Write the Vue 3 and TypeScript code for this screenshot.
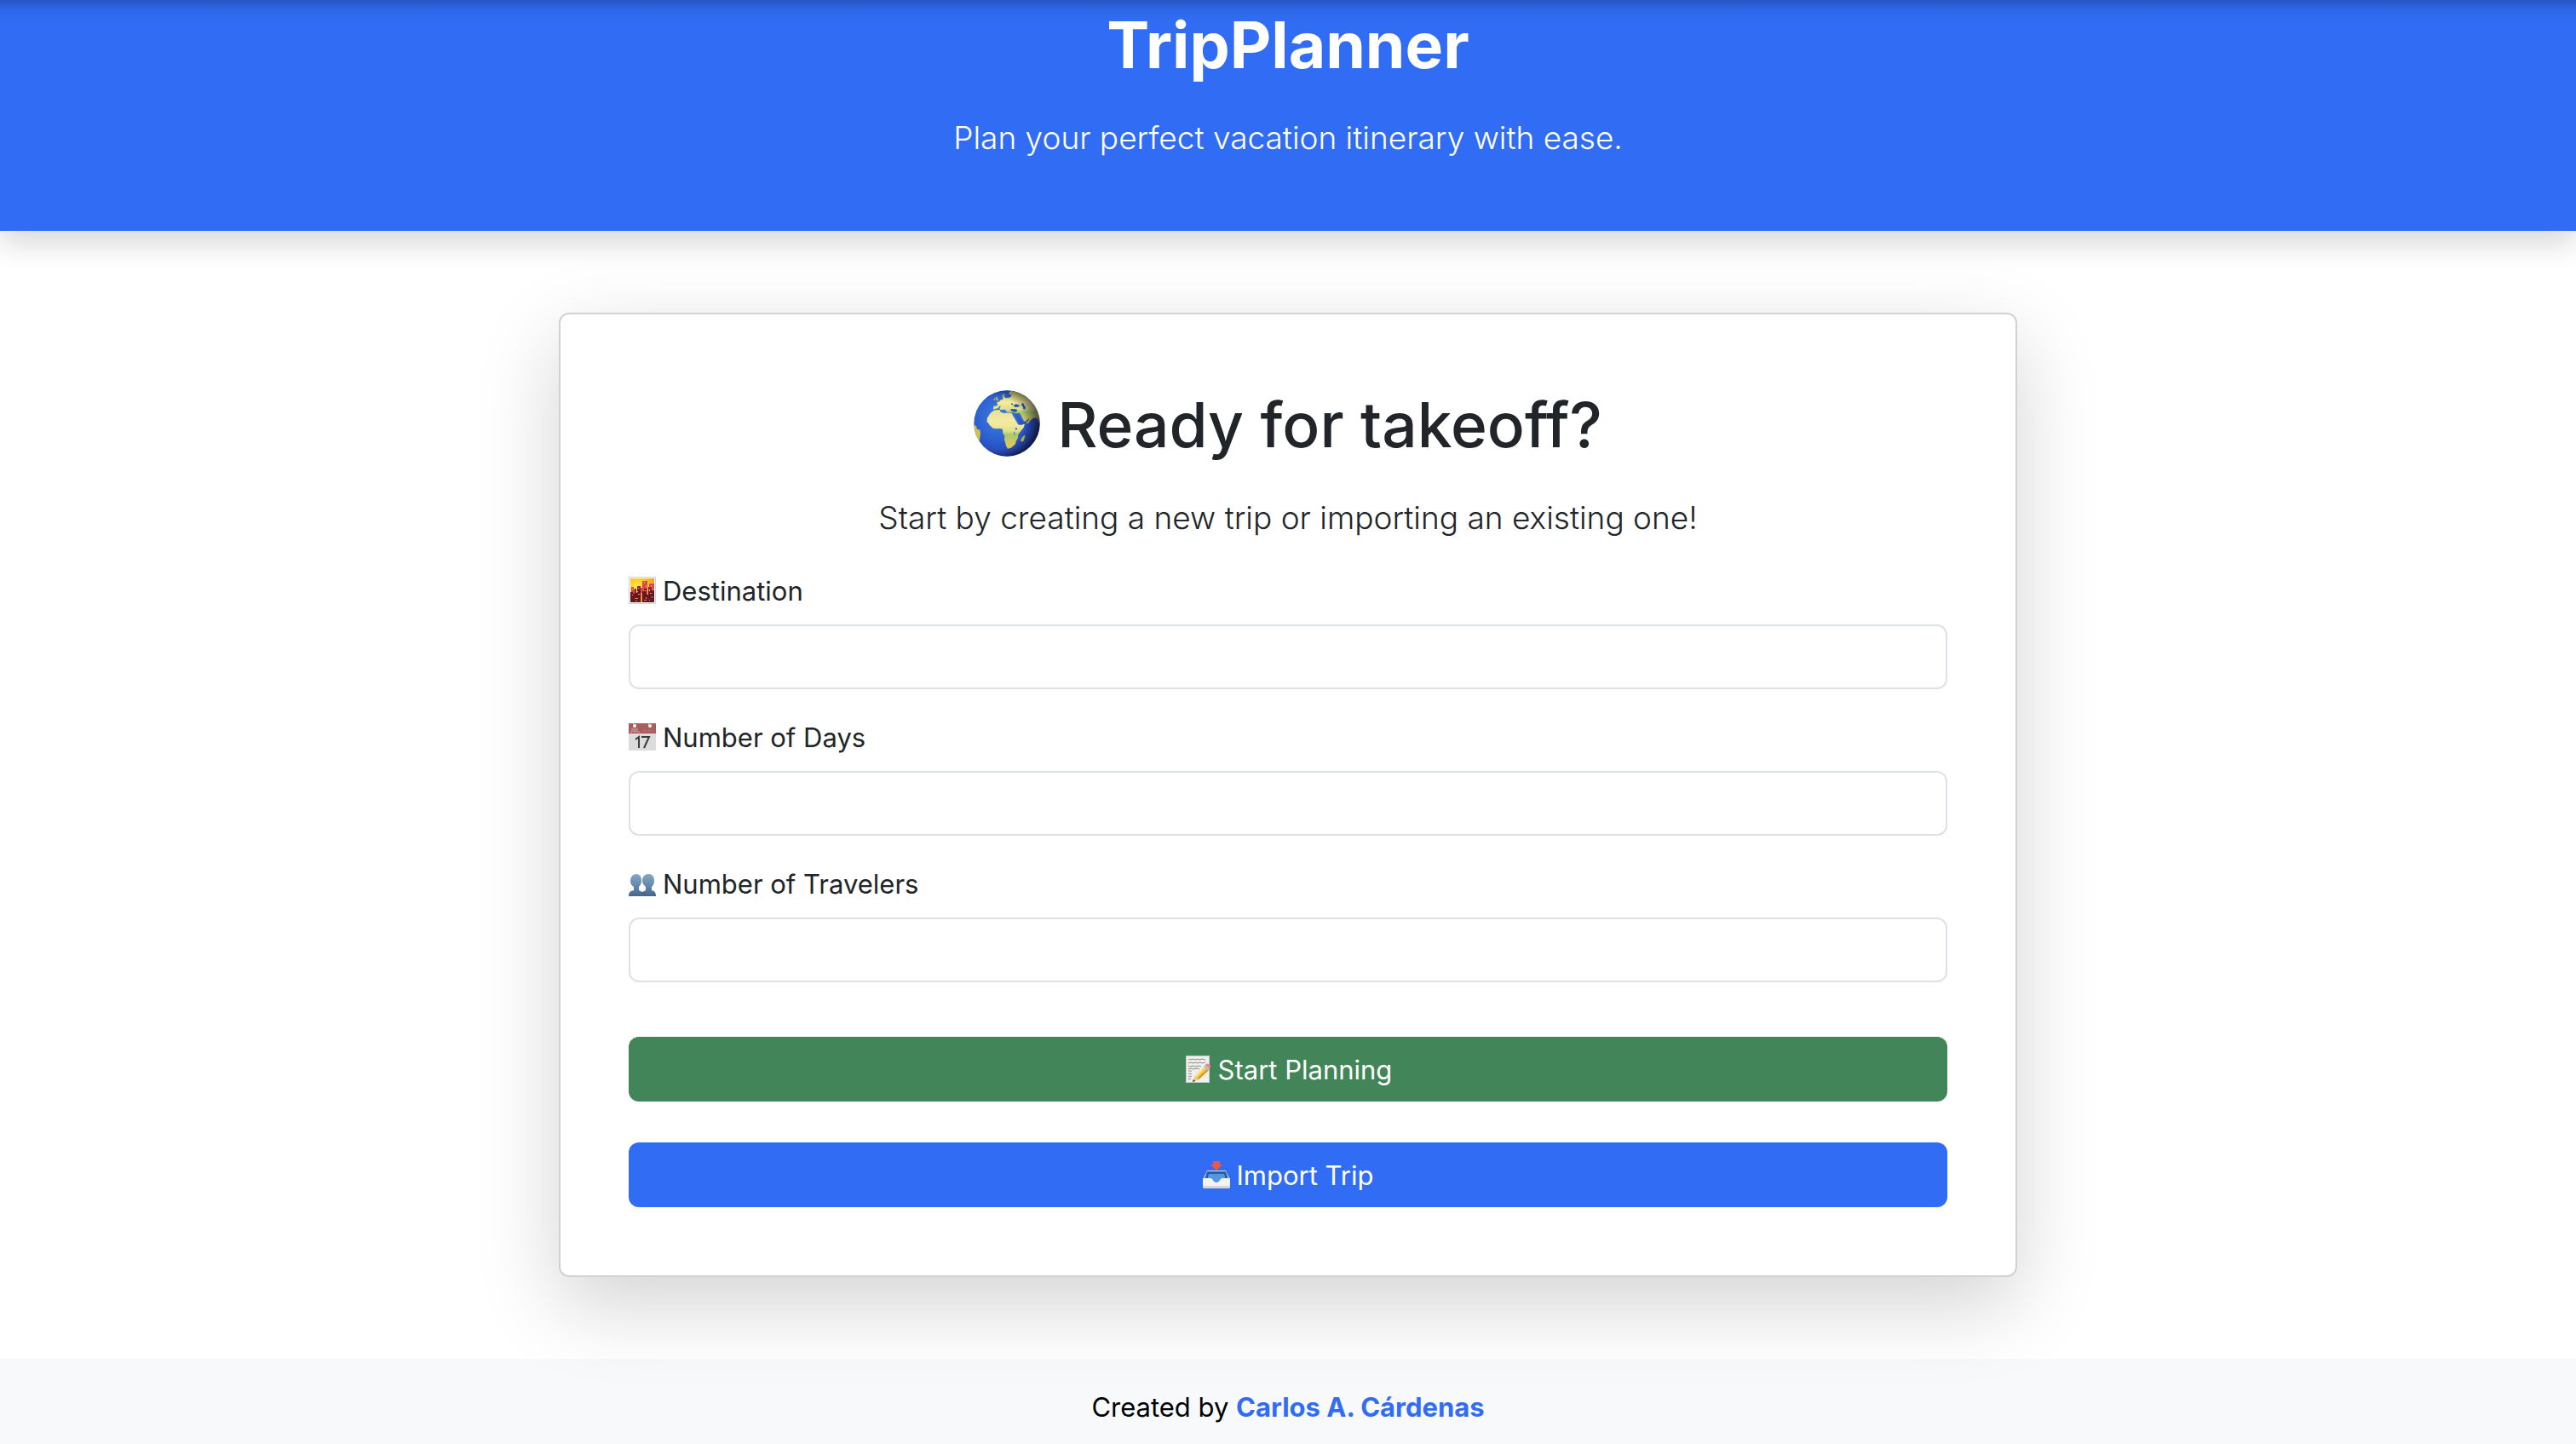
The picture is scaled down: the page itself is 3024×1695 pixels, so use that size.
<script setup lang="ts">
import { ref } from 'vue'

const destination = ref('')
const days = ref<number | null>(null)
const travelers = ref<number | null>(null)
</script>

<template>
  <div class="page">
    <header class="hero">
      <h1 class="display hero-title"><span>TripPlanner</span></h1>
      <p class="lead">Plan your perfect vacation itinerary with ease.</p>
    </header>

    <main class="container">
      <section class="card">
        <h2 class="display card-title">
          <svg class="globe" viewBox="48 53 234 234" aria-hidden="true">
            <defs>
              <radialGradient id="sea" cx="0.38" cy="0.4" r="0.66">
                <stop offset="0" stop-color="#3f7fe0" />
                <stop offset="0.55" stop-color="#2c5fd0" />
                <stop offset="0.85" stop-color="#2748b4" />
                <stop offset="1" stop-color="#1b2a6b" />
              </radialGradient>
              <linearGradient id="land" x1="0" y1="0" x2="0" y2="1">
                <stop offset="0" stop-color="#b9bd5c" />
                <stop offset="0.36" stop-color="#f3eb9c" />
                <stop offset="0.55" stop-color="#dfe08a" />
                <stop offset="0.64" stop-color="#a5c96f" />
                <stop offset="0.8" stop-color="#cdc765" />
                <stop offset="1" stop-color="#dccb57" />
              </linearGradient>
              <radialGradient id="shade" cx="0.36" cy="0.5" r="0.66">
                <stop offset="0.6" stop-color="#000000" stop-opacity="0" />
                <stop offset="1" stop-color="#0c0a20" stop-opacity="0.7" />
              </radialGradient>
              <clipPath id="disc"><circle cx="165" cy="170" r="116" /></clipPath>
            </defs>
            <circle cx="165" cy="170" r="116" fill="url(#sea)" />
            <g clip-path="url(#disc)">
              <path d="M117 121l1-12 13-1 2-5-5-6 8-3 8-7 7-2 0-8 5-2 3 6 11-1 9-4 3-8-7 1-3-6 5-7 12-5-4 7 8-1 9-3 30 8 30 30 20 38 2 45-4-2-6-17-8-6-9 2-12 10-2 6-9 3-10-11-12-24-5-3-8 2-14-3-12 1-10-4-4-8-16 2-4-6 5-7-5-1-5 7z" fill="url(#land)" />
              <path d="M95 165l1-14 11-17 13-10 19-2 4 8 10 4 14-1 15 2 15 29 11 12 20-4-4 13-10 12-9 12-1 12-6 10-4 13-14 12-12 3-6-10-3-12-3-11 1-12-6-9-1-14-8-3-12 1-14-2-11-10-7-10z" fill="url(#land)" />
              <path d="M95 165l1-14 11-17 13-10 19-2 4 8 10 4 14-1 15 2 12 20 8 13-30-4-30 3-30-2z" fill="#f8efad" opacity="0.7" />
              <path d="M147 72l9-7 2 5-7 9zM128 91l-3-9 4-9 3 8 4 8zM119 89l0-6 5-2-1 7z" fill="#a9b65b" />
              <path d="M213 229l6-10 8-8 2 5-5 16-7 3z" fill="#d4c04c" />
              <path d="M44 170l15 12-1 7 12 4 2 11-2 16-3 22-12-10-10-18z" fill="#d3c34a" />
            </g>
            <g fill="#2a58b8">
              <path d="M187 108l10-7 5 2 8 3-4 6-12 1zM217 100l6-1 3 8 5 5-2 10-6-3-2-9-5-4zM178 119l21 1 3 7-10 4-12-5zM181 99l7 2-3 4-5-1z" />
              <path d="M196 138l5 2 13 21 5 6 14-5 9-9 2 3-10 12-17 7-7-8z" />
            </g>
            <path d="M194 187l5-3 2 6-4 4zM189 199l3 1 2 12-3-2z" fill="#2c5fd0" />
            <circle cx="165" cy="170" r="116" fill="url(#shade)" />
          </svg>
          <span>Ready for takeoff?</span>
        </h2>
        <p class="lead">Start by creating a new trip or importing an existing one!</p>

        <form class="form" @submit.prevent>
          <div class="field">
            <label for="destination">
              <svg class="icon" viewBox="0 0 32 32" aria-hidden="true">
                <defs>
                  <radialGradient id="dusk" cx="0.3" cy="0.45" r="0.8">
                    <stop offset="0" stop-color="#fff13d" />
                    <stop offset="0.55" stop-color="#fcc92b" />
                    <stop offset="1" stop-color="#f19a22" />
                  </radialGradient>
                </defs>
                <rect width="32" height="32" fill="#cbd5d5" />
                <rect x="1" y="1" width="30" height="30" fill="#ffffff" />
                <rect x="2" y="2" width="28" height="28" fill="url(#dusk)" />
                <path d="M3 30V12h3v3h3v15zM16 30V5h6v25zM24 30V8h6v22zM13 30V13h3v17z" fill="#d9474c" />
                <path d="M2 30V18h3v2h2v-6h2v5h1v-8h4v19zM16 30V17h2v-3h3v7h2v-9h4v4h3v14z" fill="#681622" />
                <path d="M7 15h2v3H7zM10 11h4v4h-4zM23 12h4v4h-4z" fill="#8c2531" />
                <path d="M14 19h2v11h-2z" fill="#f58a3c" />
                <path d="M18 6h1v2h-1zM20 10h1v2h-1zM26 10h1v2h-1zM28 14h1v2h-1zM4 14h1v1H4zM11 13h1v1h-1zM24 15h1v2h-1z" fill="#f6a5a0" />
                <path d="M4 21h1v1H4zM11 20h2v1h-2zM25 19h2v1h-2zM20 24h1v2h-1zM27 23h1v2h-1zM10 17h1v1h-1zM24 27h1v1h-1z" fill="#d99a9a" />
                <path d="M7 25h4v1H7zM17 16h4v1h-4zM18 27h3v1h-3zM8 28h2v1H8z" fill="#c88b2d" />
              </svg>
              <span>Destination</span>
            </label>
            <input id="destination" v-model="destination" type="text" />
          </div>

          <div class="field">
            <label for="days">
              <svg class="icon" viewBox="0 0 32 32" aria-hidden="true">
                <rect width="32" height="32" fill="#dcdcdc" />
                <rect width="32" height="12" fill="#a65e5e" />
                <circle cx="7" cy="3" r="2" fill="#ffffff" />
                <circle cx="25" cy="3" r="2" fill="#ffffff" />
                <path d="M5 0l2 2M23 0l2 3" stroke="#e7cccc" stroke-width="1" />
                <path d="M4 6v4H2M6 6v4h2V6M10 6v4h3" fill="none" stroke="#d3aaaa" stroke-width="1" />
                <path d="M18 7v3M20 7v3M23 7v3M25 7v3M28 7v3" stroke="#b37575" stroke-width="1" />
                <path d="M8 19l4-3v13M15 16h9l-6 13" fill="none" stroke="#3b3b3b" stroke-width="2" />
              </svg>
              <span>Number of Days</span>
            </label>
            <input id="days" v-model="days" type="number" />
          </div>

          <div class="field">
            <label for="travelers">
              <svg class="icon" viewBox="0 0 32 32" aria-hidden="true">
                <defs>
                  <linearGradient id="bust" x1="0" y1="5" x2="0" y2="31" gradientUnits="userSpaceOnUse">
                    <stop offset="0" stop-color="#86a6c4" />
                    <stop offset="0.5" stop-color="#658aad" />
                    <stop offset="1" stop-color="#48658a" />
                  </linearGradient>
                </defs>
                <path d="M9 5c4 0 6 3 6 8 0 3-1 5-3 7v4l4 2 4-2v-4c-2-2-4-4-4-7 0-5 3-8 7-8 5 0 7 3 7 8 0 3-1 5-3 7v4c3 1 5 2 5 7H0c0-5 2-6 6-7v-4c-3-2-4-4-4-7 0-5 3-8 7-8z" fill="url(#bust)" />
                <path d="M16 27l3 2 2 2" fill="none" stroke="#3f5a7c" stroke-width="1" />
              </svg>
              <span>Number of Travelers</span>
            </label>
            <input id="travelers" v-model="travelers" type="number" />
          </div>

          <div class="actions">
            <button type="submit" class="btn btn-success">
              <svg class="icon" viewBox="0 0 32 32" aria-hidden="true">
                <rect x="2" y="0" width="28" height="32" fill="#c9cbc7" />
                <rect x="3" y="1" width="26" height="30" fill="#efefed" />
                <g fill="none" stroke="#8c8c8c" stroke-width="1">
                  <path d="M5 5l2-1 1 1 3-1 2 1 3-1 2 1 3-1 4 1" />
                  <path d="M5 9l3-1 2 1 4-1 2 1 3-1 2 1 4-1" />
                  <path d="M5 12l2 1 3-1 3 1 4-1 3 1" />
                  <path d="M5 16l3-1 3 1 4-1 3 1M5 18h4" />
                  <path d="M5 22l2-1 2 1M5 25l3-1 1 1M5 28l3-1" />
                </g>
                <path d="M13 24l12-12 4 5-12 11-6 3z" fill="#f2bd2f" />
                <path d="M13 24l12-12 2 1-13 13z" fill="#ffe184" />
                <path d="M17 28l12-11-1-1-12 11z" fill="#c98a1c" />
                <path d="M13 24l4 4-7 3z" fill="#e8c998" />
                <path d="M11 28l2 2-3 1z" fill="#333333" />
                <path d="M23 13l2-2 5 5-2 2z" fill="#b9bcc0" />
                <path d="M25 11c1-2 3-2 5 0 2 1 1 3 0 5z" fill="#e98592" />
              </svg>
              <span>Start Planning</span>
            </button>
            <button type="button" class="btn btn-primary">
              <svg class="icon" viewBox="0 0 32 32" aria-hidden="true">
                <path d="M5 11h22l4 9v3H1v-3z" fill="#e3e3e1" />
                <path d="M5 12h22l3 9-8 6H10l-8-6z" fill="#2c5f9f" />
                <path d="M7 15h18l2 8-7 5h-8l-7-5z" fill="#5598e2" />
                <path d="M0 20h9c3 0 3 5 7 5s4-5 7-5h9v10q0 2-2 2H2q-2 0-2-2z" fill="#f3f3f2" />
                <path d="M0 29h32v1q0 2-2 2H2q-2 0-2-2z" fill="#d7d6d3" />
                <path d="M12 0h8v4h3l-7 7-7-7h3z" fill="#e8574b" />
              </svg>
              <span>Import Trip</span>
            </button>
          </div>
        </form>
      </section>
    </main>

    <footer class="footer">
      <p>Created by <a href="#">Carlos A. Cárdenas</a></p>
    </footer>
  </div>
</template>

<style>
body {
  margin: 0;
  background: #ffffff;
}
</style>

<style scoped>
.page {
  font-family: Inter, 'Liberation Sans', sans-serif;
  font-size: 31px;
  line-height: 48px;
  color: #212529;
}

.hero {
  position: relative;
  padding: 3px 24px 80px;
  text-align: center;
  color: #ffffff;
  background: linear-gradient(rgba(0, 0, 0, 0.2), rgba(0, 0, 0, 0.05) 12px, transparent 24px) #316cf4;
  box-shadow: 0 16px 32px rgba(0, 0, 0, 0.15);
}

.display {
  display: flex;
  justify-content: center;
  align-items: center;
  gap: 20px;
  margin: 0 0 32px;
  line-height: 92px;
}

.display span {
  padding-top: 4px;
}

.hero-title {
  font-size: 75px;
  font-weight: 700;
}

.card-title {
  font-size: 73px;
  font-weight: 500;
}

.lead {
  margin: 0;
  padding-top: 2px;
  font-size: 37px;
  line-height: 58px;
  font-weight: 300;
}

.container {
  box-sizing: border-box;
  width: 100%;
  max-width: 1760px;
  margin: 0 auto;
  padding: 96px 24px;
}

.card {
  position: relative;
  padding: 80px;
  border: 2px solid #d2d2d2;
  border-radius: 12px;
  background: #ffffff;
  box-shadow: 0 32px 96px rgba(0, 0, 0, 0.175);
  text-align: center;
}

.globe {
  width: 78px;
  height: 78px;
}

.form {
  display: flex;
  flex-direction: column;
  gap: 32px;
  margin-top: 32px;
}

.field {
  display: flex;
  flex-direction: column;
  gap: 16px;
}

.field label {
  display: flex;
  align-items: center;
  gap: 8px;
}

.field span,
.btn span {
  padding-top: 2px;
  line-height: 46px;
}

.icon {
  flex: none;
  width: 32px;
  height: 32px;
}

.field input {
  box-sizing: border-box;
  width: 100%;
  height: 76px;
  margin: 0;
  padding: 12px 24px;
  border: 2px solid #dee2e6;
  border-radius: 12px;
  background: #ffffff;
  color: inherit;
  font: inherit;
  appearance: textfield;
}

.actions {
  display: flex;
  flex-direction: column;
  gap: 48px;
  margin-top: 32px;
}

.btn {
  display: flex;
  justify-content: center;
  align-items: center;
  gap: 8px;
  height: 76px;
  padding: 0 24px;
  border: 0;
  border-radius: 12px;
  color: #ffffff;
  font: inherit;
  cursor: pointer;
}

.btn-success {
  background: #418558;
}

.btn-primary {
  background: #316cf4;
}

.footer {
  padding: 32px 24px 20px;
  background: #f8f9fb;
  color: #000000;
  text-align: center;
}

.footer p {
  margin: 0;
  padding-top: 2px;
  line-height: 46px;
}

.footer a {
  color: #316cf4;
  font-weight: 700;
  text-decoration: none;
}
</style>
